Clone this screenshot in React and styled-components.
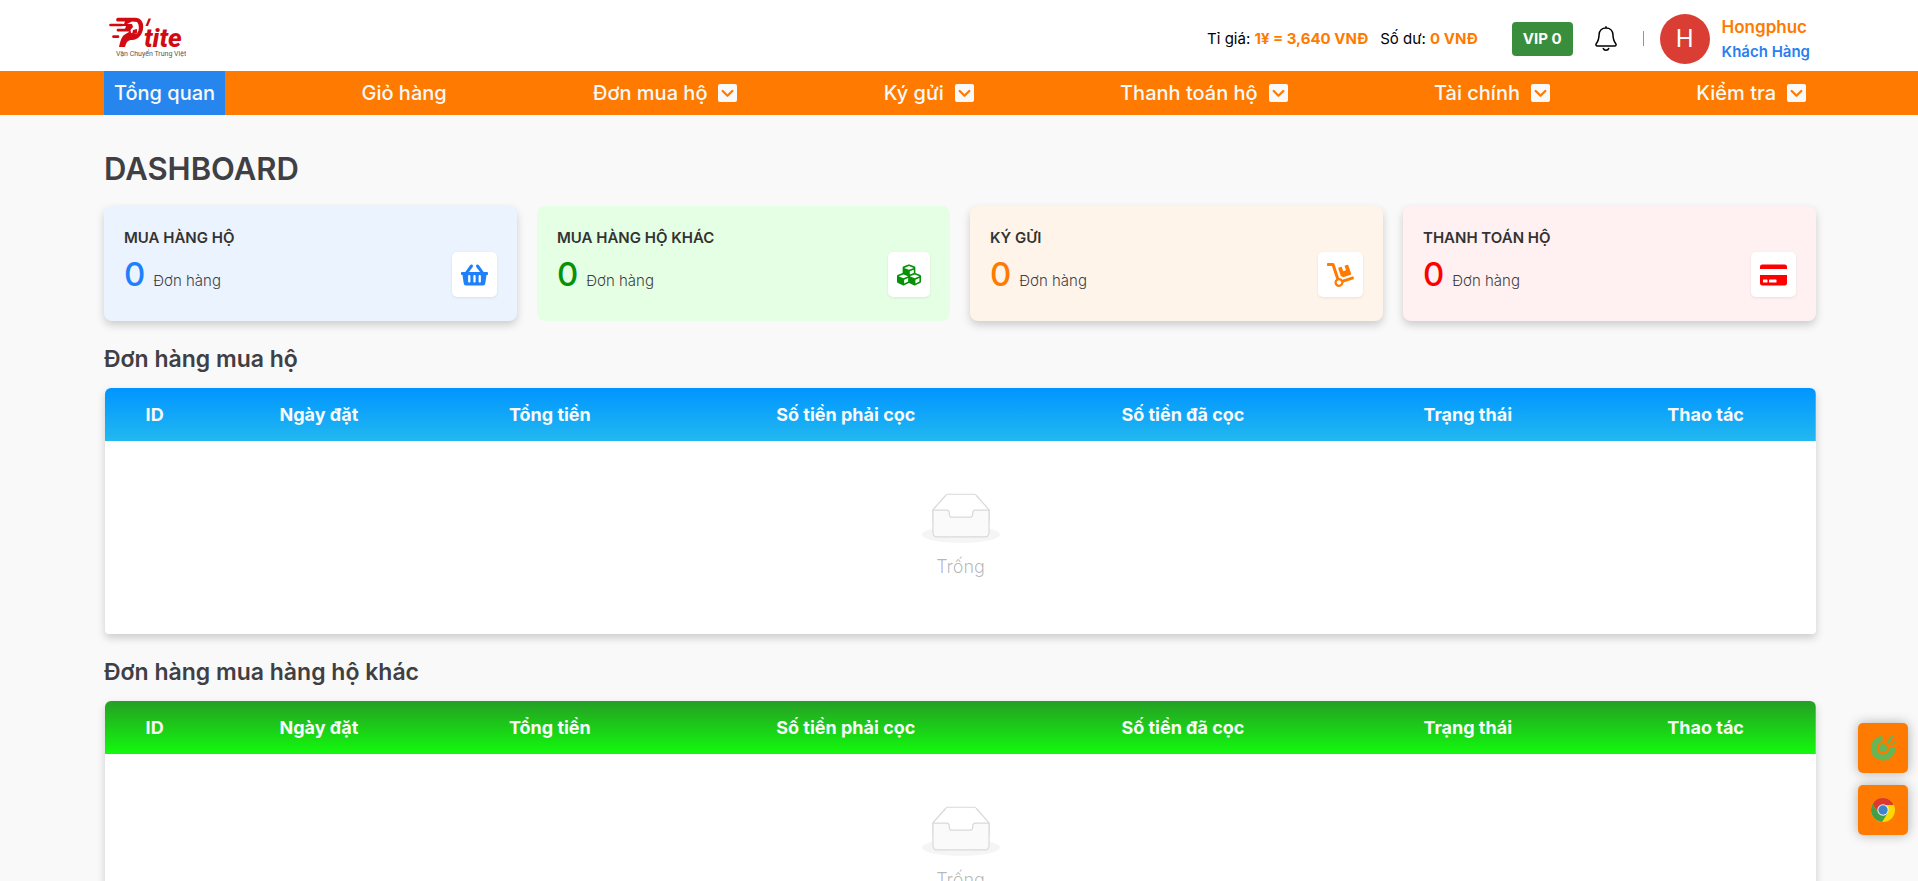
import React from "react";
import styled, { createGlobalStyle } from "styled-components";
import {
  FaShoppingBasket,
  FaCubes,
  FaDolly,
  FaCreditCard
} from "react-icons/fa";

const GlobalStyle = createGlobalStyle`
  * {
    box-sizing: border-box;
  }
  html, body {
    margin: 0;
    background: #f9f9f9;
  }
  body {
    font-family: Inter, Roboto, sans-serif;
    color: #3f3f44;
    overflow-x: hidden;
  }
  body::-webkit-scrollbar {
    display: none;
  }
  h1, h2, h3, p {
    margin: 0;
  }
`;

// same side margins for the header, the menu and the page
const Container = styled.div`
  padding: 0 102px 0 104px;
`;

const TopBar = styled(Container)`
  display: flex;
  align-items: center;
  justify-content: space-between;
  height: 71px;
  background: #fff;
`;

const LogoLink = styled.a`
  display: block;
  padding: 6px 0 0 4px;
`;

const TopRight = styled.div`
  display: flex;
  align-items: center;
  padding: 6px 6px 0 0;
`;

const Rates = styled.div`
  display: flex;
  gap: 12px;
  font-size: 15px;
  line-height: 20px;
  color: #000;
`;

const Rate = styled.p`
  strong {
    font-weight: 700;
    color: #ff7a00;
  }
`;

const VipButton = styled.button`
  height: 34px;
  margin-left: 34px;
  padding: 0 11px;
  border: 0;
  border-radius: 4px;
  background: #388e3c;
  color: #fff;
  font: 700 15px Inter, sans-serif;
`;

const BellButton = styled.button`
  display: flex;
  margin-left: 22px;
  padding: 0;
  border: 0;
  background: none;
  color: #000;
`;

const Divider = styled.span`
  width: 1px;
  height: 15px;
  margin: 0 16px 0 26px;
  background: #ff7a00;
`;

const Avatar = styled.div`
  display: flex;
  align-items: center;
  justify-content: center;
  width: 50px;
  height: 50px;
  border-radius: 50%;
  background: #d93d33;
  color: #fff;
  font-size: 24px;
`;

const User = styled.div`
  margin-left: 12px;
`;

const UserName = styled.p`
  font-size: 17px;
  font-weight: 600;
  line-height: 26px;
  color: #ff7a00;
`;

const UserRole = styled.p`
  font-size: 15px;
  font-weight: 600;
  line-height: 24px;
  color: #2a7ff0;
`;

const NavBar = styled.nav`
  background: #ff7a00;
`;

const NavList = styled(Container).attrs({ as: "ul" })`
  display: flex;
  justify-content: space-between;
  margin: 0;
  list-style: none;
`;

const NavLink = styled.a`
  display: flex;
  align-items: center;
  gap: 11px;
  height: 44px;
  padding: 0 10px;
  background: ${props => (props.$active ? "#2686ee" : "transparent")};
  color: #f9f9f9;
  font-size: 20px;
  font-weight: 500;
  text-decoration: none;
`;

const Page = styled(Container).attrs({ as: "main" })`
  padding-top: 36px;
  padding-bottom: 40px;
`;

const PageTitle = styled.h1`
  font-size: 31px;
  font-weight: 600;
  line-height: 36px;
`;

const Cards = styled.div`
  display: grid;
  grid-template-columns: repeat(4, 1fr);
  gap: 20px;
  margin-top: 19px;
`;

const Card = styled.section`
  display: flex;
  justify-content: space-between;
  height: 115px;
  padding: 20px;
  border-radius: 8px;
  background: ${props => props.$bg};
  box-shadow: ${props =>
    props.$flat ? "none" : "0 4px 8px rgba(0, 0, 0, 0.18)"};
`;

const CardTitle = styled.h3`
  font-size: 15px;
  font-weight: 600;
  line-height: 24px;
  color: #333;
`;

const CardCount = styled.p`
  display: flex;
  align-items: baseline;
  gap: 8px;
  font-size: 15px;
  font-weight: 300;
  line-height: 48px;
  strong {
    font-size: 33px;
    font-weight: 500;
    color: ${props => props.$color};
  }
`;

const CardIcon = styled.div`
  display: flex;
  align-items: center;
  align-self: flex-end;
  height: 45px;
  margin-bottom: 4px;
  padding: 0 9px;
  border-radius: 5px;
  background: #fff;
  color: ${props => props.$color};
  box-shadow: 0 1px 3px rgba(0, 0, 0, 0.08);
  svg {
    width: ${props => (props.$square ? "24px" : "27px")};
    height: 24px;
  }
`;

const SectionTitle = styled.h2`
  margin: 22px 0 13px;
  font-size: 23px;
  font-weight: 600;
  line-height: 32px;
`;

const TableBox = styled.div`
  margin-left: 1px;
  border-radius: 6px 6px 4px 4px;
  background: #fff;
  overflow: hidden;
  box-shadow: 0 4px 8px rgba(0, 0, 0, 0.18);
`;

const Table = styled.table`
  width: 100%;
  border-collapse: collapse;
  table-layout: fixed;
  thead {
    background: linear-gradient(${props => props.$from}, ${props => props.$to});
  }
  th {
    height: 53px;
    padding: 0;
    color: #f9f9f9;
    font-size: 18px;
    font-weight: 700;
  }
  td {
    height: 193px;
    padding: 52px 0 0;
    text-align: center;
    vertical-align: top;
  }
`;

const EmptyText = styled.p`
  margin-top: 10px;
  font-size: 18px;
  font-weight: 300;
  line-height: 28px;
  color: rgba(0, 0, 0, 0.3);
`;

const EmptySvg = styled.svg`
  display: block;
  margin: 0 auto;
`;

const Floating = styled.div`
  position: fixed;
  right: 10px;
  bottom: 46px;
  display: grid;
  gap: 12px;
`;

const FloatingLink = styled.a`
  display: flex;
  align-items: center;
  justify-content: center;
  width: 50px;
  height: 50px;
  border-radius: 5px;
  background: #ff7a00;
  box-shadow: 0 0 12px rgba(0, 0, 0, 0.3);
`;

const menu = [
  { label: "Tổng quan", active: true },
  { label: "Giỏ hàng" },
  { label: "Đơn mua hộ", sub: true },
  { label: "Ký gửi", sub: true },
  { label: "Thanh toán hộ", sub: true },
  { label: "Tài chính", sub: true },
  { label: "Kiểm tra", sub: true }
];

const cards = [
  { title: "MUA HÀNG HỘ", color: "#1f80fa", bg: "#ebf3ff", Icon: FaShoppingBasket },
  { title: "MUA HÀNG HỘ KHÁC", color: "#069206", bg: "#e5ffe5", Icon: FaCubes, flat: true, square: true },
  { title: "KÝ GỬI", color: "#ff7a00", bg: "#fff4ea", Icon: FaDolly },
  { title: "THANH TOÁN HỘ", color: "#ff0000", bg: "#fff1f1", Icon: FaCreditCard }
];

const columns = [
  { label: "ID", width: "5.8%" },
  { label: "Ngày đặt", width: "13.4%" },
  { label: "Tổng tiền", width: "13.6%" },
  { label: "Số tiền phải cọc", width: "21%" },
  { label: "Số tiền đã cọc", width: "18.4%" },
  { label: "Trạng thái", width: "14.9%" },
  { label: "Thao tác", width: "12.9%" }
];

function Logo() {
  return (
    <svg width="78" height="42" viewBox="0 0 78 42" role="img" aria-label="P'tite">
      <g fill="#d20a11">
        <path
          fillRule="evenodd"
          d="M10 1.800H27C33 1.800 35.600 6.500 35.200 11.500C34.500 19 30 24 24 24C19.500 24 18.500 26 17 31H11C12.500 25 13.500 20 17.500 18L21 16L20 13H17L18 10H13V8H16L17 5.500H10A1.800 1.800 0 0 1 10 1.800ZM24 5.500L19 8H24L25 11L22.500 14L23 17L29 17.500C31.500 14 31.500 9 29 6Z"
        />
        <path d="M25 14L29 13V17L24 18Z" />
        <path d="M40.500 2.500H43L40 10H37.500Z" />
      </g>
      <path
        fill="none"
        stroke="#d20a11"
        strokeWidth="2.700"
        strokeLinecap="round"
        d="M2.500 9H14M10 14.200H20M5.500 20.700H10"
      />
      <text x="36" y="31" fill="#d20a11" fontFamily="Roboto, sans-serif" fontSize="26" fontWeight="800" fontStyle="italic">
        tite
      </text>
      <text x="8" y="40" fill="#555" fontFamily="Roboto, sans-serif" fontSize="7">
        Vận Chuyển Trung Việt
      </text>
    </svg>
  );
}

function BellIcon() {
  return (
    <svg width="22" height="25" viewBox="0 0 22 25" fill="none" stroke="currentColor" strokeWidth="1.500" strokeLinecap="round" aria-hidden="true">
      <path d="M11 .8V2M11 2C7 2 4.300 4.800 4.100 8.500C3.900 13.500 3.400 15 1.500 17.300C.4 18.700 1 20 2.500 20H19.500C21 20 21.600 18.700 20.500 17.300C18.600 15 18.100 13.500 17.900 8.500C17.700 4.800 15 2 11 2Z" />
      <path d="M8.300 22.500C9 24.700 13 24.700 13.700 22.500" />
    </svg>
  );
}

function DownSquare() {
  return (
    <svg width="19" height="18" viewBox="0 0 19 18" aria-hidden="true">
      <rect width="19" height="18" rx="2" fill="#f9f9f9" />
      <path d="M4.700 7L9.500 11.700L14.300 7" fill="none" stroke="#ff7a00" strokeWidth="2.300" strokeLinecap="round" strokeLinejoin="round" />
    </svg>
  );
}

function EmptyIcon() {
  return (
    <EmptySvg width="78" height="50" viewBox="0 0 64 41" aria-hidden="true">
      <g transform="translate(0 1)" fill="none" fillRule="evenodd">
        <ellipse fill="#f5f5f5" cx="32" cy="33" rx="32" ry="7" />
        <g fillRule="nonzero" stroke="#d9d9d9">
          <path d="M55 12.76L44.854 1.258C44.367.474 43.656 0 42.907 0H21.093c-.749 0-1.46.474-1.947 1.257L9 12.761V22h46v-9.24z" />
          <path
            fill="#fafafa"
            d="M41.613 15.931c0-1.605.994-2.93 2.227-2.931H55v18.137C55 33.26 53.68 35 52.05 35h-40.1C10.32 35 9 33.259 9 31.137V13h11.16c1.233 0 2.227 1.323 2.227 2.928v.022c0 1.605 1.005 2.901 2.237 2.901h14.752c1.232 0 2.237-1.308 2.237-2.913v-.007z"
          />
        </g>
      </g>
    </EmptySvg>
  );
}

function CocCocIcon() {
  return (
    <svg width="26" height="26" viewBox="0 0 26 26" aria-hidden="true">
      <path fill="none" stroke="#65b657" strokeWidth="6" d="M12.500 4A9.300 9.300 0 1 0 22.300 12.500" />
      <circle cx="13" cy="13" r="4" fill="#65b657" />
      <path fill="#65b657" d="M16.500 8L21 1H24L18.500 9ZM20.500 9.500L25 6V8.500L20.500 10.500Z" />
    </svg>
  );
}

function ChromeIcon() {
  return (
    <svg width="26" height="26" viewBox="0 0 26 26" aria-hidden="true">
      <circle cx="13" cy="13" r="12" fill="#fdd901" />
      <path fill="#3fa047" d="M2.600 7A12 12 0 0 0 12 25L18 15.500L8 15.500Z" />
      <path fill="#dc3a2e" d="M2.600 7A12 12 0 0 1 23.800 8H13L8 15.500Z" />
      <circle cx="13" cy="13" r="5.700" fill="#f1f1f1" />
      <circle cx="13" cy="13" r="4.700" fill="#3f83cc" />
    </svg>
  );
}

function OrderTable({ title, from, to }) {
  return (
    <section>
      <SectionTitle>{title}</SectionTitle>
      <TableBox>
        <Table $from={from} $to={to} aria-label={title}>
          <colgroup>
            {columns.map(col => (
              <col key={col.label} width={col.width} />
            ))}
          </colgroup>
          <thead>
            <tr>
              {columns.map(col => (
                <th key={col.label} scope="col">
                  {col.label}
                </th>
              ))}
            </tr>
          </thead>
          <tbody>
            <tr>
              <td colSpan={columns.length}>
                <EmptyIcon />
                <EmptyText>Trống</EmptyText>
              </td>
            </tr>
          </tbody>
        </Table>
      </TableBox>
    </section>
  );
}

export default function App() {
  return (
    <>
      <GlobalStyle />
      <header>
        <TopBar>
          <LogoLink href="#">
            <Logo />
          </LogoLink>
          <TopRight>
            <Rates>
              <Rate>
                Tỉ giá: <strong>1¥ = 3,640 VNĐ</strong>
              </Rate>
              <Rate>
                Số dư: <strong>0 VNĐ</strong>
              </Rate>
            </Rates>
            <VipButton>VIP 0</VipButton>
            <BellButton aria-label="Thông báo">
              <BellIcon />
            </BellButton>
            <Divider />
            <Avatar>H</Avatar>
            <User>
              <UserName>Hongphuc</UserName>
              <UserRole>Khách Hàng</UserRole>
            </User>
          </TopRight>
        </TopBar>
        <NavBar>
          <NavList>
            {menu.map(item => (
              <li key={item.label}>
                <NavLink href="#" $active={item.active}>
                  {item.label}
                  {item.sub && <DownSquare />}
                </NavLink>
              </li>
            ))}
          </NavList>
        </NavBar>
      </header>
      <Page>
        <PageTitle>DASHBOARD</PageTitle>
        <Cards>
          {cards.map(({ title, color, bg, flat, square, Icon }) => (
            <Card key={title} $bg={bg} $flat={flat}>
              <div>
                <CardTitle>{title}</CardTitle>
                <CardCount $color={color}>
                  <strong>0</strong> Đơn hàng
                </CardCount>
              </div>
              <CardIcon $color={color} $square={square}>
                <Icon />
              </CardIcon>
            </Card>
          ))}
        </Cards>
        <OrderTable title="Đơn hàng mua hộ" from="#0095ff" to="#22b8f0" />
        <OrderTable title="Đơn hàng mua hàng hộ khác" from="#259f25" to="#12fa0c" />
      </Page>
      <Floating>
        <FloatingLink href="#" aria-label="Cốc Cốc">
          <CocCocIcon />
        </FloatingLink>
        <FloatingLink href="#" aria-label="Chrome">
          <ChromeIcon />
        </FloatingLink>
      </Floating>
    </>
  );
}
